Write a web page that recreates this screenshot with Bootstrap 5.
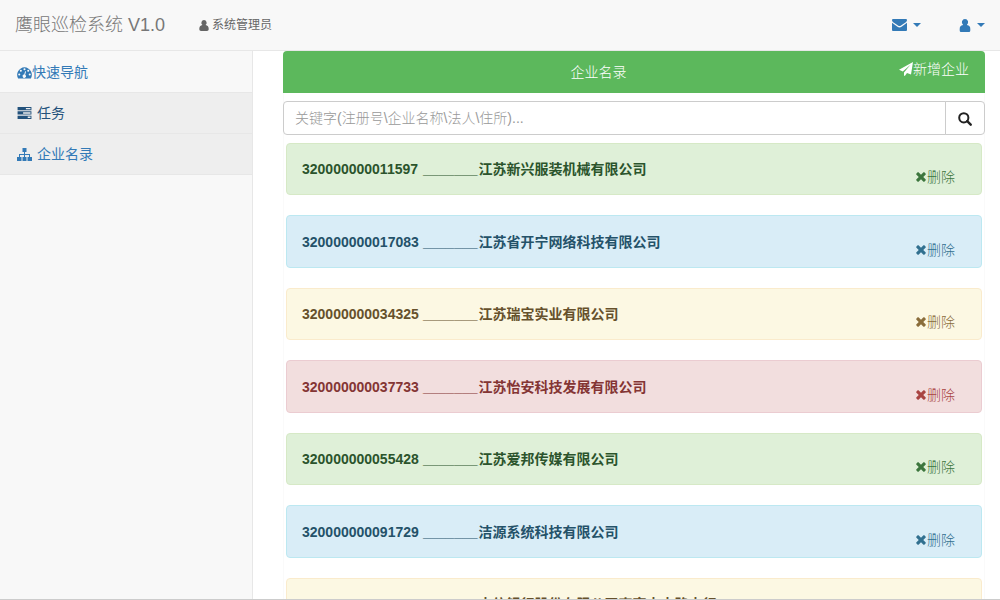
<!DOCTYPE html>
<html lang="zh-CN">
<head>
<meta charset="utf-8">
<meta name="viewport" content="width=device-width, initial-scale=1">
<title>鹰眼巡检系统 V1.0</title>
<link href="https://cdn.jsdelivr.net/npm/bootstrap@5.3.0/dist/css/bootstrap.min.css" rel="stylesheet">
<style>
:root { --line: #e7e7e7; --blue: #337ab7; }
body { font-family: "Liberation Sans", "Noto Sans CJK SC", sans-serif; font-size: 14px; line-height: 20px; color: #333; background: #fff; }
a { color: var(--blue); text-decoration: none; }
svg { fill: currentColor; flex: none; }
.app { height: 100vh; overflow: hidden; border-bottom: 1px solid #ccc; }
.topbar { height: 51px; background: #f8f8f8; border-bottom: 1px solid var(--line); color: #777; padding: 0 15px; }
.topbar .title { font-size: 18px; color: #777; font-weight: 300; }
.topbar .who { font-size: 12px; margin-left: 34px; gap: 3px; color: #666; }
.tools { gap: 38px; }
.tools .btn { gap: 6px; color: var(--blue); border: 0; padding: 0; }
.tools .btn::after { margin: 0; border: 4px solid transparent; border-top-color: currentColor; border-bottom: 0; }
.side { width: 253px; flex: none; background: #f8f8f8; border-right: 1px solid var(--line); padding-top: 1px; }
.side a { height: 41px; padding: 0 17px; border-bottom: 1px solid var(--line); }
.side .shade { background: #eee; gap: 5px; }
.side .current { color: #23527c; }
.content { padding: 0 15px 0 30px; min-width: 0; }
.panel { border: 1px solid #fafafa; border-top: 0; border-radius: 4px; }
.panel-top { height: 42px; margin: 0 -1px; padding-right: 71px; background: #5cb85c; color: #fff; border-radius: 4px 4px 0 0; font-weight: 300; }
.panel-top .add { right: 16px; top: 8px; color: #fff; }
.search { margin: 8px -1px; width: auto; height: 34px; }
.search .form-control { font-size: 14px; font-weight: 300; padding: 0 11px; border-color: #ccc; border-radius: 4px; }
.search .form-control::placeholder { color: #999; }
.search .btn { width: 40px; padding: 0; border: 1px solid #ccc; color: #222; border-radius: 4px; }
.firms { display: grid; grid-auto-rows: 52px 53px; gap: 20px; padding: 0 2px; }
.firms .alert { padding: 0 26px 0 15px; margin: 0; border-radius: 4px; }
.firms .name { font-weight: 700; color: var(--name); }
.firms .number { display: inline-block; min-width: 121px; }
.firms .firm { margin-left: 1px; }
.firms .del { gap: 1px; padding: 16px 0 0; color: inherit; border: 0; background: none; font-weight: 300; }
.firms .alert-success { background: #dff0d8; border-color: #d6e9c6; color: #3c763d; --name: #2b542c; }
.firms .alert-info { background: #d9edf7; border-color: #bce8f1; color: #31708f; --name: #245269; }
.firms .alert-warning { background: #fcf8e3; border-color: #faebcc; color: #8a6d3b; --name: #66512c; }
.firms .alert-danger { background: #f2dede; border-color: #ebccd1; color: #a94442; --name: #843534; }
</style>
</head>
<body>
<svg class="d-none">
  <symbol id="user" viewBox="0 0 12 14"><path d="M6 0a3.4 3.6 0 0 1 2 6.500C10.800 6.800 12 8.700 12 11.500 12 13 11.200 14 9.800 14H2.200C.8 14 0 13 0 11.500 0 8.700 1.200 6.800 4 6.500A3.400 3.600 0 0 1 6 0z"/></symbol>
  <symbol id="cross" viewBox="0 0 11 11"><path d="M2.800.3 5.500 3 8.200.3Q8.700 0 9.200.3L10.700 1.800Q11 2.300 10.700 2.800L8 5.500 10.700 8.200Q11 8.700 10.700 9.200L9.200 10.700Q8.700 11 8.200 10.700L5.500 8 2.800 10.700Q2.300 11 1.800 10.700L.3 9.200Q0 8.700.3 8.200L3 5.500.3 2.800Q0 2.300.3 1.800L1.800.3Q2.300 0 2.800.3z"/></symbol>
</svg>
<div class="app d-flex flex-column">
  <header class="topbar d-flex align-items-center flex-shrink-0">
    <a class="title" href="#">鹰眼巡检系统 V1.0</a>
    <span class="who d-flex align-items-center"><svg width="10" height="11"><use href="#user"/></svg>系统管理员</span>
    <div class="tools d-flex ms-auto">
      <button class="btn dropdown-toggle d-flex align-items-center" type="button" aria-label="消息">
        <svg width="15" height="12" viewBox="0 0 15 12"><path d="M1 0h13q1 0 1 1.200 0 1-1.200 2L9 6.600q-1.500 1-3 0L1.200 3.200Q0 2.300 0 1.200 0 0 1 0zM0 3.800l5.500 4q2 1.400 4 0l5.500-4V11q0 1-1 1H1q-1 0-1-1z"/></svg>
      </button>
      <button class="btn dropdown-toggle d-flex align-items-center" type="button" aria-label="用户">
        <svg width="12" height="13" viewBox="0 0 12 14"><use href="#user"/></svg>
      </button>
    </div>
  </header>
  <div class="d-flex flex-grow-1 overflow-hidden">
    <nav class="side">
      <a class="d-flex align-items-center" href="#"><svg width="15" height="13" viewBox="0 0 16 13"><path fill-rule="evenodd" d="M8 1a8 8 0 0 1 6.800 12H1.200A8 8 0 0 1 8 1zM8 2a1.100 1.100 0 1 0 0 2.200A1.100 1.100 0 0 0 8 2zM4.100 3.600a1.100 1.100 0 1 0 0 2.200 1.100 1.100 0 0 0 0-2.200zM2.400 7.500a1.100 1.100 0 1 0 0 2.200 1.100 1.100 0 0 0 0-2.200zM13.600 7.500a1.100 1.100 0 1 0 0 2.200 1.100 1.100 0 0 0 0-2.200zM12 3.600a1.100 1.100 0 1 0 0 2.200 1.100 1.100 0 0 0 0-2.200zM8.700 5.200 7.700 8.700a1.700 1.700 0 1 0 1 .3l1-3.500z"/></svg>快速导航</a>
      <a class="shade current d-flex align-items-center" href="#"><svg width="15" height="12" viewBox="0 0 15 13"><path fill-rule="evenodd" d="M0 0h15v3.500H0zM9 1v1.500h5V1zM0 4.700h15v3.500H0zM6 5.700v1.500h8V5.700zM0 9.400h15v3.500H0zM11 10.400v1.500h3v-1.500z"/></svg>任务</a>
      <a class="shade d-flex align-items-center" href="#"><svg width="15" height="13" viewBox="0 0 15 13"><path d="M5.500 0h4v4H8v2h5v3h2v4h-4.500V9H12V7H8v2h1.500v4h-4V9H7V7H3v2h1.500v4H0V9h2V6h5V4H5.500z"/></svg>企业名录</a>
    </nav>
    <main class="content flex-grow-1">
      <section class="panel">
        <div class="panel-top position-relative d-flex align-items-center justify-content-center">
          <span class="heading">企业名录</span>
          <a class="add position-absolute d-flex align-items-center" href="#"><svg width="14" height="14" viewBox="0 0 14 14"><path d="M14 0 12 12.500 8 10.900 5.800 14 5 13.500V10.500L11.500 2.700 3.800 9.400 0 7.800z"/></svg>新增企业</a>
        </div>
        <form class="search input-group">
          <input class="form-control" type="text" aria-label="关键字" placeholder="关键字(注册号\企业名称\法人\住所)...">
          <button class="btn" type="button" aria-label="搜索"><svg width="14" height="14" viewBox="0 0 14 14"><g fill="none" stroke="currentColor" stroke-width="2"><circle cx="5.800" cy="5.800" r="4.600"/><path d="m9.200 9.200 3.500 3.500" stroke-width="2.400" stroke-linecap="round"/></g></svg></button>
        </form>
        <div class="firms">
          <div class="alert alert-success d-flex align-items-center justify-content-between"><span class="name"><span class="number">320000000011597</span>_______<span class="firm">江苏新兴服装机械有限公司</span></span><button class="del d-flex align-items-center" type="button"><svg width="10" height="10"><use href="#cross"/></svg>删除</button></div>
          <div class="alert alert-info d-flex align-items-center justify-content-between"><span class="name"><span class="number">320000000017083</span>_______<span class="firm">江苏省开宁网络科技有限公司</span></span><button class="del d-flex align-items-center" type="button"><svg width="10" height="10"><use href="#cross"/></svg>删除</button></div>
          <div class="alert alert-warning d-flex align-items-center justify-content-between"><span class="name"><span class="number">320000000034325</span>_______<span class="firm">江苏瑞宝实业有限公司</span></span><button class="del d-flex align-items-center" type="button"><svg width="10" height="10"><use href="#cross"/></svg>删除</button></div>
          <div class="alert alert-danger d-flex align-items-center justify-content-between"><span class="name"><span class="number">320000000037733</span>_______<span class="firm">江苏怡安科技发展有限公司</span></span><button class="del d-flex align-items-center" type="button"><svg width="10" height="10"><use href="#cross"/></svg>删除</button></div>
          <div class="alert alert-success d-flex align-items-center justify-content-between"><span class="name"><span class="number">320000000055428</span>_______<span class="firm">江苏爱邦传媒有限公司</span></span><button class="del d-flex align-items-center" type="button"><svg width="10" height="10"><use href="#cross"/></svg>删除</button></div>
          <div class="alert alert-info d-flex align-items-center justify-content-between"><span class="name"><span class="number">320000000091729</span>_______<span class="firm">洁源系统科技有限公司</span></span><button class="del d-flex align-items-center" type="button"><svg width="10" height="10"><use href="#cross"/></svg>删除</button></div>
          <div class="alert alert-warning d-flex align-items-center justify-content-between"><span class="name"><span class="number">320000000093652</span>_______<span class="firm">中信银行股份有限公司南京中山路支行</span></span><button class="del d-flex align-items-center" type="button"><svg width="10" height="10"><use href="#cross"/></svg>删除</button></div>
        </div>
      </section>
    </main>
  </div>
</div>
<script src="https://cdn.jsdelivr.net/npm/bootstrap@5.3.0/dist/js/bootstrap.bundle.min.js"></script>
</body>
</html>
